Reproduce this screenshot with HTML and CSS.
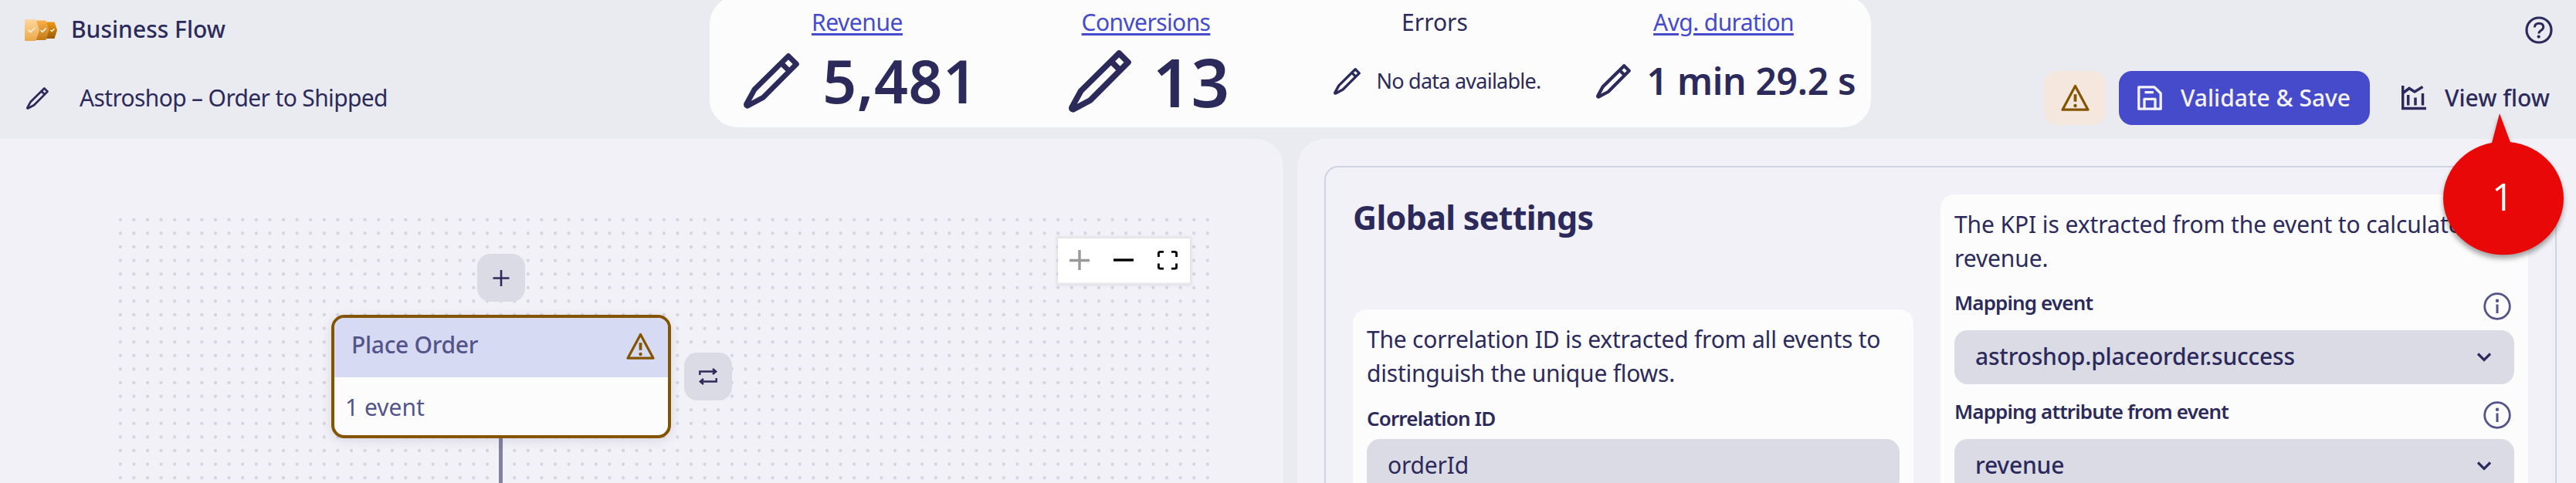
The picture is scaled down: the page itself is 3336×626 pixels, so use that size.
FILE: index.html
```html
<!DOCTYPE html>
<html lang="en">
<head>
<meta charset="utf-8">
<title>Business Flow</title>
<link rel="stylesheet" href="styles.css">
</head>
<body>
<svg class="defs" width="0" height="0">
  <symbol id="pencil" viewBox="0 0 72 72"><path d="M58 3.6 68.4 14 25 57.6 5 68.3Q3 68 3.6 66L14 47Z M49.5 13.5 58.8 22.8" fill="none" stroke="currentColor" stroke-width="6.8" stroke-linejoin="round"/></symbol>
  <symbol id="warn" viewBox="0 0 37 36"><path d="M18.5 2.5 35 33.2H2Z" fill="none" stroke="currentColor" stroke-width="3.2" stroke-linejoin="round"/><path d="M18.5 13.2v9.5" stroke="currentColor" stroke-width="3.8"/><circle cx="18.5" cy="28" r="2.2" fill="currentColor"/></symbol>
  <symbol id="info" viewBox="0 0 36 36"><circle cx="18" cy="18" r="16.3" fill="none" stroke="currentColor" stroke-width="2.8"/><path d="M18 15.5v11.5" stroke="currentColor" stroke-width="3"/><circle cx="18" cy="10.8" r="2.2" fill="currentColor"/></symbol>
  <symbol id="chevron" viewBox="0 0 20 13"><path d="M2 2.5 10 10.5 18 2.5" fill="none" stroke="currentColor" stroke-width="3.2"/></symbol>
</svg>

<header class="header">
  <div class="brand">
    <div class="brand-row">
      <svg class="app-icon" viewBox="0 0 42 28">
        <defs>
          <linearGradient id="g1" x2="0" y2="1"><stop stop-color="#ffd79e"/><stop offset="1" stop-color="#eba84a"/></linearGradient>
          <linearGradient id="g2" x2="0" y2="1"><stop stop-color="#fbb04a"/><stop offset="1" stop-color="#c07c18"/></linearGradient>
          <linearGradient id="g3" x2="0" y2="1"><stop stop-color="#ee9916"/><stop offset="1" stop-color="#995c00"/></linearGradient>
        </defs>
        <path d="M26 3.500H38.500L42 14 38.500 25H26Z" fill="url(#g3)"/>
        <path d="M13 1.500h13.500Q27.500 1.500 28 3L31.500 14 28 25.500Q27.500 27 26.500 27H13Z" fill="url(#g2)"/>
        <path d="M1.500 0H13.500Q14.500 0 15 1.500L19 14 15 26.500Q14.500 28 13.500 28H1.500Q0 28 0 26.500v-25Q0 0 1.500 0Z" fill="url(#g1)"/>
        <path d="m4.500 13.500 3.200 3.200 5.500-6M20.500 14l2.500 2.400 4.600-5M33.500 13.800l1.800 1.700 3.200-3.300" fill="none" stroke="#fff4e2" stroke-width="1.600"/>
      </svg>
      <span class="t md">Business Flow</span>
    </div>
    <div class="flow-row">
      <svg class="flow-pencil"><use href="#pencil"/></svg>
      <span class="t flow-name">Astroshop – Order to Shipped</span>
    </div>
  </div>

  <section class="kpis">
    <div class="kpi"><a class="kpi-label link">Revenue</a><div class="kpi-value v1"><svg><use href="#pencil"/></svg><span class="t">5,481</span></div></div>
    <div class="kpi"><a class="kpi-label link tight">Conversions</a><div class="kpi-value v2"><svg><use href="#pencil"/></svg><span class="t">13</span></div></div>
    <div class="kpi"><span class="kpi-label plain-label">Errors</span><div class="kpi-value v3"><svg><use href="#pencil"/></svg><span class="t">No data available.</span></div></div>
    <div class="kpi"><a class="kpi-label link tight">Avg. duration</a><div class="kpi-value v4"><svg><use href="#pencil"/></svg><span class="t">1 min 29.2 s</span></div></div>
  </section>

  <div class="tools">
    <svg class="help" viewBox="0 0 36 36"><circle cx="18" cy="18" r="16" fill="none" stroke="currentColor" stroke-width="3.200"/><path d="M12.300 14.500q.3-5.200 5.800-5.200t5.700 4.800q0 2.500-3.200 4.500-2.700 1.800-2.700 4" fill="none" stroke="currentColor" stroke-width="3"/><circle cx="17.700" cy="26.600" r="2.100" fill="currentColor"/></svg>
    <div class="actions">
      <span class="btn-warn"><svg><use href="#warn"/></svg></span>
      <span class="btn-save">
        <svg viewBox="0 0 32 32"><path d="M2 1.800H22L30.200 10V30.200H1.800V1.800Z M9 30V17.300H23V30 M9.500 8.600H21" fill="none" stroke="currentColor" stroke-width="3.300" stroke-linejoin="round"/></svg>
        <span class="t md">Validate &amp; Save</span>
      </span>
      <span class="btn-view">
        <svg viewBox="0 0 32 32"><path d="M1.700 0V29.500H32 M2 9.500 10 3.500 17 8 27.500 1.500 M8.700 12V25.500M18 15.500V25.500M27.500 10V25.500" fill="none" stroke="currentColor" stroke-width="3.500"/></svg>
        <span class="t md">View flow</span>
      </span>
    </div>
  </div>
</header>

<main class="main">
  <section class="panel flow">
    <div class="canvas">
      <svg class="dots"><defs><pattern id="grid" width="17.600" height="17.600" patternUnits="userSpaceOnUse"><circle cx="8.800" cy="8.800" r="2.100" fill="#d3d3e2"/></pattern></defs><rect width="1425.600" height="352" fill="url(#grid)"/></svg>
      <div class="controls">
        <svg class="off" viewBox="0 0 26 26"><path d="M0 13.500H26M13 0V26" stroke="currentColor" stroke-width="3.400"/></svg>
        <svg viewBox="0 0 26 26"><path d="M0 13H26" stroke="currentColor" stroke-width="3.400"/></svg>
        <svg viewBox="0 0 26 26"><path d="M1.400 9V4.500Q1.400 2.400 3.500 2.400H8M18 2.400h4.500Q24.600 2.400 24.600 4.500V9M24.600 17.500V22Q24.600 24.100 22.500 24.100H18M8 24.100H3.500Q1.400 24.100 1.400 22V17.500" fill="none" stroke="currentColor" stroke-width="2.900"/></svg>
      </div>
      <span class="edge"></span>
      <span class="chip add"><svg viewBox="0 0 22 22"><path d="M.5 11.500H21.500M11 1V22" stroke="currentColor" stroke-width="2.600"/></svg></span>
      <article class="node">
        <div class="node-head"><span class="t md node-title">Place Order</span><svg><use href="#warn"/></svg></div>
        <div class="node-body">1 event</div>
      </article>
      <span class="chip swap"><svg viewBox="0 0 24 22"><path d="M1.300 9V4.500H22.500M18 1l4.200 3.500L18 8M22.700 13v4.500H1.500M6 14l-4.200 3.500L6 21" fill="none" stroke="currentColor" stroke-width="2.400"/></svg></span>
    </div>
  </section>

  <section class="panel settings">
    <div class="frame">
      <div class="col">
        <h1 class="title">Global settings</h1>
        <div class="card corr">
          <p class="text">The correlation ID is extracted from all events to<br>distinguish the unique flows.</p>
          <div class="label">Correlation ID</div>
          <div class="field plain">orderId</div>
        </div>
      </div>
      <div class="card">
        <p class="text wide">The KPI is extracted from the event to calculate<br>revenue.</p>
        <div class="label">Mapping event<svg><use href="#info"/></svg></div>
        <div class="field">astroshop.placeorder.success<svg><use href="#chevron"/></svg></div>
        <div class="label">Mapping attribute from event<svg><use href="#info"/></svg></div>
        <div class="field">revenue<svg><use href="#chevron"/></svg></div>
      </div>
    </div>
  </section>
</main>

<div class="callout">
  <svg viewBox="0 0 156 184"><path d="M73 0 88 40H62.500Z" fill="#e90808"/><ellipse cx="78" cy="110" rx="78" ry="73.300" fill="#e90808"/></svg>
  <span class="callout-num">1</span>
</div>
</body>
</html>
```
FILE: styles.css
```css
* { box-sizing: border-box; margin: 0; }
body { background: #eaebf0; color: #2c2a5b; font: 400 30px/44px "Noto Sans", sans-serif; width: 3336px; height: 626px; overflow: hidden; position: relative; }
svg { display: block; flex: none; }
.defs { position: absolute; }
.t { white-space: nowrap; }
.md { font-weight: 500; }

.header { height: 180px; display: flex; justify-content: space-between; align-items: flex-start; }
.brand { width: 919px; padding: 16px 0 0 32px; }
.brand-row { display: flex; align-items: center; gap: 18px; height: 44px; }
.app-icon { width: 42px; height: 28px; margin-top: 2px; }
.flow-row { display: flex; align-items: center; gap: 40px; height: 44px; margin-top: 45px; padding-left: 2px; }
.flow-pencil { width: 29px; height: 29px; }
.flow-name { letter-spacing: -.65px; }

.kpis { width: 1504px; height: 170px; margin-top: -5px; padding: 12px 4px 0; border-radius: 36px; background: #fcfcfc; display: grid; grid-template-columns: repeat(4, 1fr); }
.kpi { display: flex; flex-direction: column; align-items: center; }
.kpi-label { line-height: 44px; letter-spacing: -.45px; white-space: nowrap; }
.tight { letter-spacing: -.6px; }
.plain-label { letter-spacing: 0; }
.link { color: #464bcb; text-decoration: underline; text-decoration-thickness: 3px; text-underline-offset: 2.5px; }
.kpi-value { display: flex; align-items: center; height: 108px; padding-left: 6px; }
.v1 { font-size: 77px; font-weight: 600; gap: 30px; letter-spacing: .6px; padding-left: 9px; }
.v1 svg { width: 72px; height: 72px; }
.v2 { font-size: 87px; font-weight: 600; gap: 28px; padding-left: 8px; }
.v2 svg { width: 81px; height: 81px; }
.v3 { font-size: 27px; gap: 21px; letter-spacing: -.76px; }
.v3 svg { width: 35px; height: 35px; }
.v4 { font-size: 48px; font-weight: 600; gap: 21px; letter-spacing: -.3px; }
.v4 svg { width: 45px; height: 45px; }

.tools { width: 913px; padding: 21px 30px 0 0; display: flex; flex-direction: column; align-items: flex-end; }
.help { width: 36px; height: 36px; }
.actions { display: flex; height: 70px; margin-top: 35px; gap: 17px; }
.btn-warn { width: 80px; border-radius: 17px; background: #f4e7de; color: #845400; display: grid; place-items: center; }
.btn-warn svg { width: 37px; height: 36px; }
.btn-save { width: 325px; border-radius: 17px; background: #464bcb; color: #f4f3fd; display: flex; align-items: center; gap: 24px; padding-left: 24px; }
.btn-view { width: 220px; display: flex; align-items: center; gap: 24px; padding-left: 24px; }
.btn-save svg, .btn-view svg { width: 32px; height: 32px; }

.main { display: grid; grid-template-columns: 1662px 1656px; gap: 18px; height: 446px; }
.panel { background: #f2f1f7; overflow: hidden; }
.flow { border-radius: 0 36px 0 0; padding: 95.9px 0 0 147.2px; }
.settings { border-radius: 36px 0 0 0; padding: 35px 25px 0 35px; }

/* Diagram canvas: nodes and controls sit at free positions over the dot grid */
.canvas { position: relative; width: 1425.6px; height: 352px; }
.dots { width: 1425.6px; height: 352px; }
.controls { position: absolute; left: 1222.8px; top: 33.1px; width: 171px; height: 59px; background: #fff; border-bottom: 2px solid #eee; box-shadow: 0 0 4px 2px rgba(0,0,0,.08); display: flex; justify-content: space-around; align-items: center; color: #000; }
.controls svg { width: 26px; height: 26px; }
.controls .off { color: #999; }
.edge { position: absolute; left: 499.3px; top: 290px; width: 5px; height: 70px; background: #82829e; }
.chip { position: absolute; width: 62px; height: 62px; border-radius: 17px; background: #dbdbe6; display: grid; place-items: center; }
.add { left: 470.8px; top: 53.1px; }
.add svg { width: 22px; height: 22px; }
.swap { left: 738.8px; top: 181.1px; }
.swap svg { width: 24px; height: 22px; }
.node { position: absolute; left: 281.8px; top: 132.1px; width: 440px; height: 160px; border: 4px solid #845400; border-radius: 17px; background: #fcfcfc; overflow: hidden; color: #54548a; box-shadow: 0 3px 14px rgba(44,42,91,.12); }
.node-head { height: 77px; padding: 0 17px 2px 22px; background: #d6daf3; display: flex; align-items: center; justify-content: space-between; }
.node-title { letter-spacing: -.3px; padding-bottom: 5px; }
.node-head svg { width: 37px; height: 36px; color: #845400; }
.node-body { height: 75px; padding: 17px 0 0 14px; }

.frame { height: 440px; border: 2px solid #d0d3e0; border-radius: 18px; padding: 35px 35px 0; display: grid; grid-template-columns: 726px 761px; gap: 35px; }
.title { font-size: 43px; line-height: 60px; font-weight: 700; height: 149px; letter-spacing: -.7px; }
.card { background: #fcfcfc; border-radius: 18px; height: 420px; padding: 17px 18px 0; }
.text { letter-spacing: -.22px; white-space: nowrap; }
.wide { letter-spacing: -.1px; }
.label { display: flex; align-items: flex-start; justify-content: space-between; font-size: 26px; font-weight: 600; height: 71px; padding: 13px 4px 0 0; letter-spacing: -.85px; }
.corr .label { height: 63px; padding-top: 14px; }
.label svg { width: 36px; height: 36px; margin-top: 9px; color: #54548a; }
.field { height: 70px; border-radius: 17px; background: #dbdbe6; display: flex; align-items: center; justify-content: space-between; padding: 0 29px 2px 27px; font-weight: 500; letter-spacing: -.2px; }
.field svg { width: 20px; height: 13px; }
.plain { font-weight: 400; }
.callout { position: absolute; left: 3164px; top: 147px; width: 156px; height: 184px; filter: drop-shadow(0 5px 3px rgba(0,0,0,.35)); }
.callout-num { position: absolute; left: 0; top: 77px; width: 154px; text-align: center; color: #fff; font: 500 49px/60px "Open Sans", sans-serif; }
```
